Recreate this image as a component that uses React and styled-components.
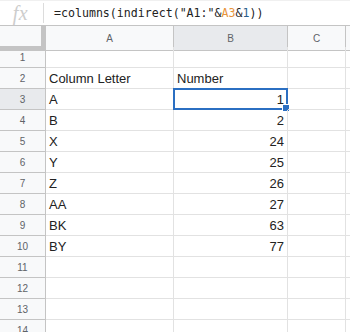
import React from "react";
import styled, { createGlobalStyle } from "styled-components";

const GlobalStyle = createGlobalStyle`
  html, body {
    margin: 0;
    padding: 0;
    background: #ffffff;
    overflow: hidden;
  }
`;

const Page = styled.div`
  width: 350px;
  height: 332px;
  overflow: hidden;
  font-family: "Liberation Sans", Arial, sans-serif;
  background: #fff;
`;

const FormulaBar = styled.div`
  height: 26px;
  box-sizing: border-box;
  display: flex;
  align-items: center;
  border-top: 1px solid #f0f0f0;
  border-bottom: 1px solid #c4c4c4;
`;

const FxLabel = styled.div`
  width: 44px;
  height: 20px;
  display: flex;
  align-items: center;
  justify-content: center;
  border-right: 1px solid #dcdcdc;
  font-family: "Liberation Serif", "Times New Roman", serif;
  font-style: italic;
  font-size: 20px;
  color: #cdcdcd;
  letter-spacing: 0.5px;
  padding-right: 2px;
  box-sizing: border-box;
`;

const Formula = styled.div`
  padding-left: 10px;
  font-family: "DejaVu Sans Mono", "Liberation Mono", monospace;
  font-size: 11.6px;
  color: #222;
  white-space: nowrap;
  padding-bottom: 1px;
`;

const Ref = styled.span`
  color: ${(p) => p.$color};
`;

const Grid = styled.div`
  display: grid;
  grid-template-columns: 46px 128px 114px 58px 1fr;
  grid-auto-rows: 21px;
`;

const CornerCell = styled.div`
  height: 25px;
  box-sizing: border-box;
  background: #f8f9fa;
  border-right: 1px solid #c4c4c4;
  border-bottom: 1px solid #c4c4c4;
  position: relative;
  &::before {
    content: "";
    position: absolute;
    right: 0;
    top: 0;
    bottom: 0;
    width: 4px;
    background: #c4c4c4;
  }
  &::after {
    content: "";
    position: absolute;
    left: 0;
    right: 0;
    bottom: 0;
    height: 4px;
    background: #c4c4c4;
  }
`;

const ColHeader = styled.div`
  height: 25px;
  box-sizing: border-box;
  display: flex;
  align-items: center;
  justify-content: center;
  font-size: 10px;
  color: #5f6368;
  background: ${(p) => (p.$active ? "#e8eaed" : "#f8f9fa")};
  border-right: 1px solid #c4c4c4;
  border-bottom: 1px solid #c4c4c4;
`;

const RowHeader = styled.div`
  box-sizing: border-box;
  display: flex;
  align-items: center;
  justify-content: center;
  font-size: 10px;
  color: #5f6368;
  padding-top: 1px;
  background: ${(p) => (p.$active ? "#e8eaed" : "#f8f9fa")};
  border-right: 1px solid #c4c4c4;
  border-bottom: 1px solid #c4c4c4;
`;

const Cell = styled.div`
  box-sizing: border-box;
  position: relative;
  display: flex;
  align-items: flex-end;
  justify-content: ${(p) => (p.$right ? "flex-end" : "flex-start")};
  padding: 0 3px 2px 3px;
  font-size: 13px;
  line-height: 15px;
  color: #222;
  white-space: nowrap;
  border-right: 1px solid #e2e2e2;
  border-bottom: 1px solid #e2e2e2;
`;

const Selection = styled.div`
  position: absolute;
  top: -1px;
  left: -1px;
  right: -1px;
  bottom: -1px;
  border: 2px solid #2b6fc2;
  pointer-events: none;
`;

const FillHandle = styled.div`
  position: absolute;
  right: -4px;
  bottom: -4px;
  width: 6px;
  height: 6px;
  background: #2b6fc2;
  border: 1px solid #fff;
`;

const rows = [
  ["", ""],
  ["Column Letter", "Number", "header"],
  ["A", 1],
  ["B", 2],
  ["X", 24],
  ["Y", 25],
  ["Z", 26],
  ["AA", 27],
  ["BK", 63],
  ["BY", 77],
  ["", ""],
  ["", ""],
  ["", ""],
  ["", ""],
];

const App = () => {
  return (
    <Page>
      <GlobalStyle />
      <FormulaBar>
        <FxLabel>fx</FxLabel>
        <Formula>
          =columns(indirect("A1:"&amp;<Ref $color="#e8933a">A3</Ref>&amp;
          <Ref $color="#2a5e8c">1</Ref>))
        </Formula>
      </FormulaBar>
      <Grid>
        <CornerCell />
        <ColHeader>A</ColHeader>
        <ColHeader $active>B</ColHeader>
        <ColHeader>C</ColHeader>
        <ColHeader />
        {rows.map(([a, b, kind], i) => {
          const n = i + 1;
          const selected = n === 3;
          return (
            <React.Fragment key={n}>
              <RowHeader $active={selected}>{n}</RowHeader>
              <Cell>{a}</Cell>
              <Cell $right={kind !== "header"}>
                {b}
                {selected && (
                  <Selection>
                    <FillHandle />
                  </Selection>
                )}
              </Cell>
              <Cell />
              <Cell />
            </React.Fragment>
          );
        })}
      </Grid>
    </Page>
  );
};

export default App;
